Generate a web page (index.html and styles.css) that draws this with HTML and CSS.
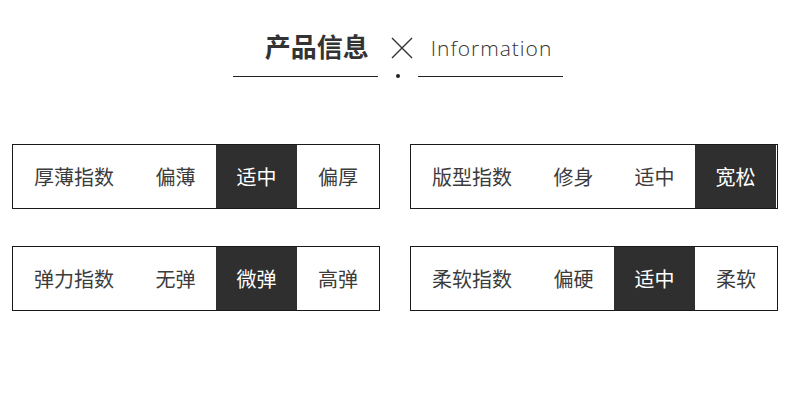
FILE: index.html
```html
<!DOCTYPE html>
<html lang="zh-CN">
<head>
<meta charset="utf-8">
<title>产品信息</title>
<link rel="stylesheet" href="styles.css">
</head>
<body>
<div class="page">
  <header class="head">
    <div class="title-row">
      <span class="title-cn">产品信息</span>
      <svg class="times" width="22" height="22" viewBox="0 0 22 22"><path d="M1 1 L21 21 M21 1 L1 21" stroke="#333" stroke-width="1.4" fill="none"/></svg>
      <span class="title-en">Information</span>
    </div>
    <div class="rule">
      <span class="rule-line"></span>
      <span class="rule-dot"></span>
      <span class="rule-line"></span>
    </div>
  </header>
  <section class="specs">
    <div class="spec">
      <div class="cell label">厚薄指数</div>
      <div class="cell">偏薄</div>
      <div class="cell active">适中</div>
      <div class="cell">偏厚</div>
    </div>
    <div class="spec">
      <div class="cell label">版型指数</div>
      <div class="cell">修身</div>
      <div class="cell">适中</div>
      <div class="cell active">宽松</div>
    </div>
    <div class="spec">
      <div class="cell label">弹力指数</div>
      <div class="cell">无弹</div>
      <div class="cell active">微弹</div>
      <div class="cell">高弹</div>
    </div>
    <div class="spec">
      <div class="cell label">柔软指数</div>
      <div class="cell">偏硬</div>
      <div class="cell active">适中</div>
      <div class="cell">柔软</div>
    </div>
  </section>
</div>
</body>
</html>
```
FILE: styles.css
```css
* { box-sizing: border-box; }
html, body { margin: 0; padding: 0; background: #fff; }
body {
  width: 790px;
  height: 415px;
  font-family: "Noto Sans CJK SC", "Noto Sans", sans-serif;
  color: #333;
}
.page {
  padding: 30px 0 0 12px;
}
.head {
  width: 766px;
  display: flex;
  flex-direction: column;
  align-items: center;
}
.title-row {
  display: flex;
  align-items: center;
  height: 32px;
  margin-left: 27px;
}
.title-cn {
  font-size: 26px;
  font-weight: 700;
  line-height: 32px;
  color: #333;
}
.times {
  margin-left: 22px;
  margin-top: 4px;
  display: block;
}
.title-en {
  margin-left: 18px;
  font-family: "Open Sans", "Noto Sans", sans-serif;
  font-weight: 300;
  font-size: 21px;
  letter-spacing: 1px;
  line-height: 32px;
  color: #333;
  margin-top: 3px;
}
.rule {
  display: flex;
  align-items: flex-start;
  height: 4px;
  margin-top: 12px;
  margin-left: 5px;
}
.rule-line {
  width: 145px;
  height: 1px;
  margin-top: 2px;
  background: #222;
}
.rule-dot {
  width: 4px;
  height: 4px;
  border-radius: 50%;
  background: #222;
  margin: 0 18px;
}
.specs {
  margin-top: 66px;
  display: grid;
  grid-template-columns: 368px 368px;
  column-gap: 30px;
  row-gap: 37px;
}
.spec {
  height: 65px;
  border: 1px solid #1a1a1a;
  display: grid;
  grid-template-columns: 122px 81px 81px 1fr;
}
.cell {
  display: flex;
  align-items: center;
  justify-content: center;
  font-size: 20px;
  color: #3c3c3c;
  line-height: 1;
}
.cell.active {
  background: #2f2f2f;
  color: #fff;
}
.spec:nth-child(2) .cell.active {
  margin-right: 1px;
}
```
